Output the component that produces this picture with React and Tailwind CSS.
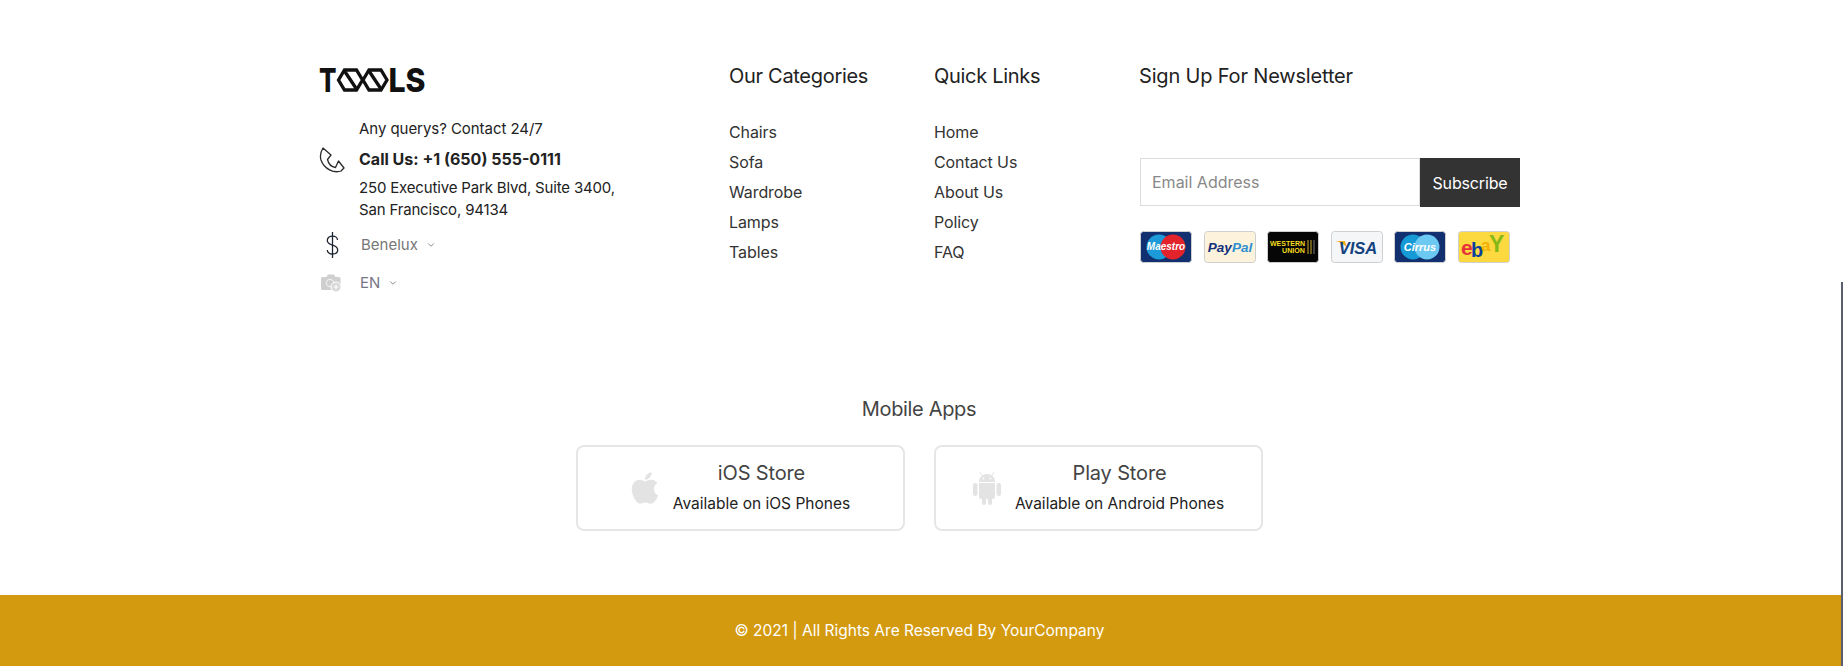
import { FaApple } from "react-icons/fa";
import { ChevronDown } from "lucide-react";

const categories = ["Chairs", "Sofa", "Wardrobe", "Lamps", "Tables"];
const quickLinks = ["Home", "Contact Us", "About Us", "Policy", "FAQ"];

function Logo() {
  return (
    <svg width="108" height="28" viewBox="0 -2 108 28" className="block overflow-visible">
      <text x="0" y="24" textLength="17.5" lengthAdjust="spacingAndGlyphs" fontFamily="Inter, sans-serif" fontWeight="800" fontSize="33" fill="#111">T</text>
      <polygon points="19.5,12 25.5,2 37.5,2 43.5,12 37.5,22 25.5,22" fill="none" stroke="#111" strokeWidth="3.3" />
      <line x1="25.5" y1="3" x2="37.5" y2="21" stroke="#111" strokeWidth="3.3" />
      <polygon points="44,12 50,2 62,2 68,12 62,22 50,22" fill="none" stroke="#111" strokeWidth="3.3" />
      <line x1="50" y1="3" x2="62" y2="21" stroke="#111" strokeWidth="3.3" />
      <text x="69.5" y="24" textLength="37" lengthAdjust="spacingAndGlyphs" fontFamily="Inter, sans-serif" fontWeight="800" fontSize="33" fill="#111">LS</text>
    </svg>
  );
}

function PhoneIcon() {
  return (
    <svg width="26" height="26" viewBox="0 0 26 26" fill="none" stroke="#2a2a2a" strokeWidth="1.3" strokeLinejoin="round">
      <path d="M4 1 L12 8 L8.5 12.5 C9.5 17 13 20 16.5 20.5 L19.5 14 L25 21 L22 24 C15 26.5 5 22 2 13 C0.8 9 1.5 5 4 1 Z" />
    </svg>
  );
}

function DollarIcon() {
  return (
    <svg width="13" height="26" viewBox="0 0 13 26" fill="none" stroke="#1c2530" strokeWidth="1.3">
      <path d="M6.5 0 V26" />
      <path d="M11.5 8 C11.5 5.5 9.5 4.2 6.5 4.2 C3.5 4.2 1.3 5.7 1.3 8.5 C1.3 11.3 3.5 12.2 6.5 13.2 C9.5 14.2 11.7 15.2 11.7 18 C11.7 20.8 9.5 22 6.5 22 C3.5 22 1.3 20.5 1.3 18" />
    </svg>
  );
}

function CameraPlusIcon() {
  return (
    <svg width="21" height="19" viewBox="0 0 21 19">
      <path d="M1.5 3 H5.5 L7 0.5 H13 L14.5 3 H18 A1.5 1.5 0 0 1 19.5 4.5 V14.5 A1.5 1.5 0 0 1 18 16 H1.5 A1.5 1.5 0 0 1 0 14.5 V4.5 A1.5 1.5 0 0 1 1.5 3 Z" fill="#cfcfcf" />
      <circle cx="9" cy="9" r="3.6" fill="none" stroke="#eee" strokeWidth="1.2" />
      <circle cx="15" cy="13" r="5" fill="#d8d8d8" stroke="#fff" strokeWidth="1" />
      <path d="M15 10.5 V15.5 M12.5 13 H17.5" stroke="#fff" strokeWidth="1" />
    </svg>
  );
}

function AndroidIcon() {
  return (
    <svg width="28" height="34" viewBox="0 0 28 34" fill="#e3e3e3">
      <path d="M6 11 C6 6 9.5 3 14 3 C18.5 3 22 6 22 11 Z" />
      <path d="M9 4.5 L7 0.8 M19 4.5 L21 0.8" stroke="#e3e3e3" strokeWidth="1" />
      <circle cx="10.5" cy="7.5" r="0.9" fill="#fff" />
      <circle cx="17.5" cy="7.5" r="0.9" fill="#fff" />
      <path d="M6 12 H22 V26 A2 2 0 0 1 20 28 H8 A2 2 0 0 1 6 26 Z" />
      <rect x="0" y="12" width="4.5" height="13" rx="2.2" />
      <rect x="23.5" y="12" width="4.5" height="13" rx="2.2" />
      <rect x="9" y="26" width="4" height="8" rx="2" />
      <rect x="15" y="26" width="4" height="8" rx="2" />
    </svg>
  );
}

function PayCard({ bg, children }) {
  return (
    <svg width="52" height="32" viewBox="0 0 52 32" className="block">
      <rect x="0.5" y="0.5" width="51" height="31" rx="3" fill={bg} stroke="#cfcfcf" />
      {children}
    </svg>
  );
}

function PaymentCards() {
  return (
    <div className="flex gap-[11.5px] mt-[24px] ml-px">
      <PayCard bg="#12306f">
        <circle cx="19" cy="16" r="12.5" fill="#1c9bd8" />
        <circle cx="33" cy="16" r="12.5" fill="#e2232b" />
        <text x="26" y="19" textAnchor="middle" fontFamily="Liberation Sans, sans-serif" fontStyle="italic" fontWeight="700" fontSize="10" fill="#fff">Maestro</text>
      </PayCard>
      <PayCard bg="#fdf3dc">
        <text x="26" y="21" textAnchor="middle" fontFamily="Liberation Sans, sans-serif" fontStyle="italic" fontWeight="700" fontSize="13.5">
          <tspan fill="#12317c">Pay</tspan>
          <tspan fill="#2d8fd0">Pal</tspan>
        </text>
      </PayCard>
      <PayCard bg="#060606">
        <text x="3" y="15" textLength="35" lengthAdjust="spacingAndGlyphs" fontFamily="Liberation Sans, sans-serif" fontWeight="700" fontSize="7" fill="#f5dc1e">WESTERN</text>
        <text x="15" y="22" textLength="23" lengthAdjust="spacingAndGlyphs" fontFamily="Liberation Sans, sans-serif" fontWeight="700" fontSize="7" fill="#f5dc1e">UNION</text>
        <path d="M41 9 V23 M44 9 V23" stroke="#c9ab2a" strokeWidth="1" />
        <path d="M47 9 V23" stroke="#777" strokeWidth="1" />
      </PayCard>
      <PayCard bg="#f5f6f7">
        <path d="M5 10 H14 L16 17 C14 14 10 11.5 5 10 Z" fill="#f2ae1c" />
        <text x="27" y="22.5" textAnchor="middle" fontFamily="Liberation Sans, sans-serif" fontStyle="italic" fontWeight="700" fontSize="16.5" fill="#12427f">VISA</text>
      </PayCard>
      <PayCard bg="#12306f">
        <circle cx="19" cy="16" r="12.5" fill="#159ad6" />
        <circle cx="33" cy="16" r="12.5" fill="#6cc9f1" />
        <text x="26" y="19.5" textAnchor="middle" fontFamily="Liberation Sans, sans-serif" fontStyle="italic" fontWeight="700" fontSize="11" fill="#fff">Cirrus</text>
      </PayCard>
      <PayCard bg="#fcd93e">
        <text x="3" y="24" fontFamily="Liberation Sans, sans-serif" fontWeight="700" fontSize="21" fill="#e53238">e</text>
        <text x="13" y="26" fontFamily="Liberation Sans, sans-serif" fontWeight="700" fontSize="20" fill="#0a3f9e">b</text>
        <text x="23" y="20" fontFamily="Liberation Sans, sans-serif" fontWeight="700" fontSize="17" fill="#f5af02">a</text>
        <text x="31" y="21" fontFamily="Liberation Sans, sans-serif" fontWeight="700" fontSize="23" fill="#86b817">Y</text>
      </PayCard>
    </div>
  );
}

function LinkColumn({ title, links }) {
  return (
    <div className="pl-[15px]">
      <h4 className="text-[20px] leading-[24px] font-normal tracking-[-0.3px] text-[#222]">{title}</h4>
      <ul className="mt-[29px] text-[16px] leading-[30px] tracking-[-0.1px] text-[#333]">
        {links.map((link) => (
          <li key={link}>{link}</li>
        ))}
      </ul>
    </div>
  );
}

function AppCard({ icon, title, subtitle }) {
  return (
    <div className="w-[329px] h-[86px] border-2 border-[#e6e6e6] rounded-lg flex items-center justify-center gap-[14px]">
      {icon}
      <div className="text-center">
        <div className="text-[20px] leading-[24px] tracking-[-0.15px] text-[#444]">{title}</div>
        <div className="text-[15.5px] leading-[22px] mt-[8px] text-[#222]">{subtitle}</div>
      </div>
    </div>
  );
}

export default function App() {
  return (
    <div className="relative w-[1843px] h-[666px] overflow-hidden bg-white font-['Inter',sans-serif]">
      <div className="w-[1841px]">
        <div className="grid grid-cols-[410px_205px_205px_410px] w-[1230px] ml-[304px] pt-[64px]">
          {/* Contact */}
          <div className="pl-[15px]">
            <div className="mt-[2px]">
              <Logo />
            </div>
            <div className="flex mt-[24px]">
              <div className="w-[40px] pt-[29px]">
                <PhoneIcon />
              </div>
              <div className="text-[15px] leading-[22px] text-[#222]">
                <div className="tracking-[-0.05px]">Any querys? Contact 24/7</div>
                <div className="mt-[8px] text-[16px] font-bold text-[#222]">Call Us: +1 (650) 555-0111</div>
                <div className="mt-[7px] tracking-[-0.17px]">250 Executive Park Blvd, Suite 3400,</div>
                <div className="tracking-[-0.17px]">San Francisco, 94134</div>
              </div>
            </div>
            <div className="flex items-center mt-[13px] h-[22px]">
              <div className="w-[42px] pl-[7px]">
                <DollarIcon />
              </div>
              <span className="text-[15px] text-[#777]">Benelux</span>
              <ChevronDown size={10} className="ml-[8px] text-[#777]" />
            </div>
            <div className="flex items-center mt-[16px] h-[22px]">
              <div className="w-[41px] pl-[2px]">
                <CameraPlusIcon />
              </div>
              <span className="text-[15px] text-[#778]">EN</span>
              <ChevronDown size={10} className="ml-[8px] text-[#777]" />
            </div>
          </div>

          <LinkColumn title="Our Categories" links={categories} />
          <LinkColumn title="Quick Links" links={quickLinks} />

          {/* Newsletter */}
          <div className="pl-[15px]">
            <h4 className="text-[20px] leading-[24px] font-normal tracking-[-0.17px] text-[#222]">Sign Up For Newsletter</h4>
            <div className="flex mt-[70px] w-[380px] ml-px">
              <input
                type="text"
                placeholder="Email Address"
                className="w-[280px] h-[48px] border border-[#dcdcdc] pl-[11px] text-[16px] outline-none placeholder:text-[#888]"
              />
              <button className="w-[100px] h-[49px] bg-[#333] text-white text-[16px] tracking-[-0.15px]">Subscribe</button>
            </div>
            <PaymentCards />
          </div>
        </div>

        {/* Mobile apps */}
        <h4 className="mt-[103px] text-center text-[20px] leading-[24px] font-normal tracking-[-0.35px] text-[#444] pr-[3px]">Mobile Apps</h4>
        <div className="flex justify-center gap-[29px] mt-[24px] pr-[2px]">
          <AppCard icon={<FaApple className="w-[34px] h-[36px] -mx-[3px] text-[#e3e3e3]" />} title="iOS Store" subtitle="Available on iOS Phones" />
          <AppCard icon={<AndroidIcon />} title="Play Store" subtitle="Available on Android Phones" />
        </div>

        <div className="mt-[64px] h-[71px] bg-[#d49a0f] flex items-center justify-center pr-[2px] text-[15.5px] text-white">
          © 2021 | All Rights Are Reserved By YourCompany
        </div>
      </div>
      {/* scrollbar sliver on the right edge */}
      <div className="absolute top-[282px] right-0 bottom-0 w-[2px] bg-[#5a5d6c]" />
    </div>
  );
}
